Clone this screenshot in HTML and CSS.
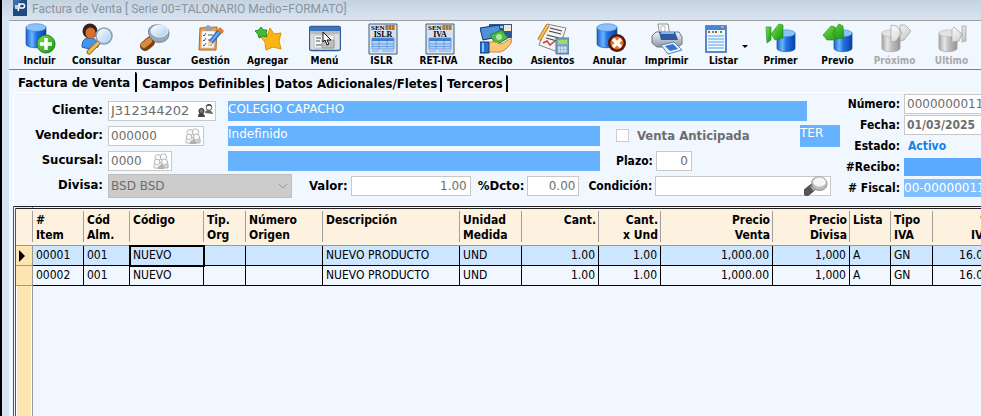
FILE: index.html
```
<!DOCTYPE html>
<html lang="es">
  <head>
    <meta charset="UTF-8" />
    <meta name="viewport" content="width=device-width, initial-scale=1.0" />
    <title>Factura de Venta</title>
    <link rel="stylesheet" href="styles.css">
  </head>
  <body>
    <!-- Shared icon parts -->
    <svg class="defs" width="0" height="0" aria-hidden="true">
      <defs>
        <linearGradient id="blue"><stop offset="0" stop-color="#1d62c8"/><stop offset=".3" stop-color="#6db4ff"/><stop offset=".5" stop-color="#2476e4"/><stop offset="1" stop-color="#0a3ea6"/></linearGradient>
        <linearGradient id="grey"><stop offset="0" stop-color="#a2a2a2"/><stop offset=".3" stop-color="#e6e6e6"/><stop offset=".55" stop-color="#bdbdbd"/><stop offset="1" stop-color="#959595"/></linearGradient>
        <linearGradient id="green" x2="1" y2="1"><stop offset="0" stop-color="#7be04a"/><stop offset="1" stop-color="#149614"/></linearGradient>
        <linearGradient id="pale" x2="1" y2="1"><stop offset="0" stop-color="#ffffff"/><stop offset="1" stop-color="#c2c2c2"/></linearGradient>
        <linearGradient id="lens" x2="1" y2="1"><stop offset="0" stop-color="#ffffff"/><stop offset="1" stop-color="#a4cdf0"/></linearGradient>
        <linearGradient id="steel" x2="0" y2="1"><stop offset="0" stop-color="#f4f6fa"/><stop offset="1" stop-color="#8a94a6"/></linearGradient>
        <symbol id="cyl" viewBox="0 0 22 26">
          <path d="M1 4v17c0 5 20 5 20 0V4z" fill="url(#blue)" stroke="#174a9c" stroke-width=".6"/>
          <ellipse cx="11" cy="4.500" rx="10" ry="3.800" fill="#8cc4fa" stroke="#3f82d8" stroke-width=".6"/>
        </symbol>
        <symbol id="cylgrey" viewBox="0 0 22 26">
          <path d="M1 4v17c0 5 20 5 20 0V4z" fill="url(#grey)" stroke="#999" stroke-width=".6"/>
          <ellipse cx="11" cy="4.500" rx="10" ry="3.800" fill="#e2e2e2" stroke="#b4b4b4" stroke-width=".6"/>
        </symbol>
        <symbol id="seniat" viewBox="0 0 30 32">
          <path d="M1 1h28v30H1z" fill="#d5e2f2" stroke="#4d5c70"/>
          <path d="M4 15h22v11H4z" fill="#b3d4f8"/>
          <path d="M4 15h22v3H4z" fill="#3f7fd0"/>
          <path d="M4 15h22v11H4zM4 21h22M4 23.500h22M11 18v8M19 18v8" fill="none" stroke="#5b93da" stroke-width=".8"/>
          <path d="M4 28h7M14 28h12" stroke="#7fa8dc"/>
          <text x="3" y="7" class="svg-sen">SEN</text>
          <path d="M17 2h10v5H17z" fill="#e09a45"/><path d="M19 2v5M22 2v5M25 2v5" stroke="#6c5a48"/>
        </symbol>
        <symbol id="people" viewBox="0 0 16 16">
          <g fill="#fafafa" stroke="#a0a0a0" stroke-width=".7">
            <circle cx="5" cy="4.500" r="3"/><circle cx="10.500" cy="4" r="3.200"/>
            <path d="M1 15c-1-6 3-7 4-7s4 1 4 7z"/><path d="M8 15c0-7 3-7 4-7s4 1 3 7z" fill="#d6d6d6"/>
            <circle cx="4" cy="9" r="2.800"/><circle cx="11.500" cy="9" r="3"/>
            <path d="M5 15.500c0-4 6-4 6 0z" fill="#b4b4b4"/>
          </g>
        </symbol>
      </defs>
    </svg>

    <div class="window">
      <header class="titlebar">
        <svg class="app-icon" viewBox="0 0 14 16" aria-hidden="true"><path d="M0 0h14v16H0z" fill="#1f4a80"/><path d="M0 0h8L0 9z" fill="#3d6fae"/><path d="M5 4h5c2 0 2 4 0 4H7M7 4L5 11M2 6h5M2 8h3" fill="none" stroke="#fff" stroke-width="1.500"/></svg>
        <h1>Factura de Venta [ Serie 00=TALONARIO Medio=FORMATO]</h1>
      </header>

      <!-- Toolbar -->
      <nav class="toolbar">
        <button type="button">
          <svg viewBox="0 0 32 32"><use href="#cyl" x="1" y="0" width="22" height="26"/><circle cx="22" cy="21" r="9" fill="url(#green)" stroke="#1c7f1c"/><path d="M22 15v12M16 21h12" stroke="#fff" stroke-width="3.500"/></svg>
          Incluir
        </button>
        <button type="button">
          <svg viewBox="0 0 32 32"><path d="M1 24c0-9 5-9 8-9s8 1 8 9c-5 2-11 2-16 0z" fill="#4b93ea" stroke="#1c58b0"/><circle cx="9" cy="8" r="7.500" fill="#35221c"/><ellipse cx="9.500" cy="10" rx="5" ry="5.500" fill="#d8702c"/><path d="M17 20L8 29" stroke="#a86a1c" stroke-width="5" stroke-linecap="round"/><path d="M17 20L8 29" stroke="#f3bd54" stroke-width="3" stroke-linecap="round"/><circle cx="23" cy="13" r="8" fill="url(#lens)" stroke="#8e9fb4" stroke-width="1.600"/></svg>
          Consultar
        </button>
        <button type="button">
          <svg viewBox="0 0 32 32"><path d="M9 20l7-6" stroke="#76808c" stroke-width="8"/><path d="M7 23l5-4" stroke="#7c4211" stroke-width="10" stroke-linecap="round"/><path d="M6 22l5-4" stroke="#d88b3c" stroke-width="6" stroke-linecap="round"/><path d="M11 6c3-7 20-5 20 4s-8 10-13 9c-5-2-9-8-7-13z" fill="#9aa8ba" stroke="#7b8797"/><ellipse cx="21.500" cy="8" rx="8.500" ry="6" fill="url(#lens)" stroke="#edf2f8"/></svg>
          Buscar
        </button>
        <button type="button">
          <svg viewBox="0 0 32 32"><path d="M5 5l17-1-1 23H4z" fill="#eda24a" stroke="#ad6725"/><path d="M7 8h13l-1 17H6z" fill="#fbfbfb" stroke="#b8b8b8" stroke-width=".6"/><path d="M10 4l3-2 4 2v4h-7z" fill="#9a9fae"/><path d="M8 12l1 1 2-3M8 17l1 1 2-3M8 22l1 1 2-3M13 12h5M13 17h5M13 22h4" fill="none" stroke="#4d5666"/><path d="M15 20l10-12" stroke="#2a60b8" stroke-width="5"/><path d="M15 20l9-11" stroke="#68a7f2" stroke-width="2.500"/><path d="M25 4l4 4-2 3-5-4z" fill="#e87b35"/><path d="M13 17l5 4-5 2z" fill="#f6d9a0"/></svg>
          Gestión
        </button>
        <button type="button">
          <svg viewBox="0 0 32 32"><path d="M18 5l4 6 7-1-2 8 2 8-8-2-7 3-1-8-5-6 8-2z" fill="#fdb515" stroke="#e48c10" stroke-linejoin="round"/><path d="M9 4l2 3 4 0-1 3 1 4-4-1-4 2-1-4-3-3 4-1z" fill="#43bb35" stroke="#1f8d20" stroke-linejoin="round"/></svg>
          Agregar
        </button>
        <button type="button">
          <svg viewBox="0 0 32 32"><rect x=".5" y="3.500" width="31" height="24" rx="2" fill="#dedede" stroke="#2d5b9c" stroke-width="1.400"/><path d="M1 4h30v4H1z" fill="#3d72bd"/><path d="M1 8h30v3H1z" fill="#b8babd"/><path d="M5 12h20v13H5z" fill="#f5f5f5" stroke="#999" stroke-width=".6"/><path d="M7 15h5M7 18h4M7 22h6" stroke="#748f9a" stroke-width="1.500"/><path d="M13 17h12v8H13z" fill="#bdbdbd" stroke="#888" stroke-width=".6"/><path d="M14 9v10l2-2 2 5 2-1-2-4h4z" fill="#fff" stroke="#111"/></svg>
          Menú
        </button>
        <button type="button">
          <svg viewBox="0 0 32 32"><use href="#seniat" x="2" y="0" width="30" height="32"/><text x="17" y="14" class="svg-name">ISLR</text></svg>
          ISLR
        </button>
        <button type="button">
          <svg viewBox="0 0 32 32"><use href="#seniat" x="2" y="0" width="30" height="32"/><text x="17" y="14" class="svg-name">IVA</text></svg>
          RET-IVA
        </button>
        <button type="button">
          <svg viewBox="0 0 32 32"><path d="M9 1h23v14H9z" fill="#2c5796"/><path d="M24 2h7v6h-7z" fill="#f4e6cc"/><path d="M11 4h12" stroke="#a9c9f0" stroke-width="2"/><path d="M0 5l19-3 3 11-19 4z" fill="#4f91da" stroke="#15345f"/><path d="M10 12l12-5 6 8-12 7z" fill="#4dbb4a" stroke="#237f2b"/><circle cx="19" cy="14" r="3" fill="#b4e69b"/><path d="M8 20c5-3 9 0 13 1 4-1 8-6 11-5 0 5-7 12-12 13H8z" fill="#f8c778" stroke="#c98a34"/><path d="M0 19h9v11H0z" fill="#2b6fc4" stroke="#123f80"/><path d="M3 20v9" stroke="#8cc1ff" stroke-width="2"/></svg>
          Recibo
        </button>
        <button type="button">
          <svg viewBox="0 0 32 32"><path d="M10 1l19 4-8 24-19-7z" fill="#f3f3f3" stroke="#858585"/><path d="M13 5l12 3M12 8l12 3M10 12l12 3M9 15l11 3" stroke="#444" stroke-width="1.200"/><path d="M6 20l4-2 3 4 5-4" fill="none" stroke="#c23c30" stroke-width="1.400"/><path d="M11 2L2 17" stroke="#c97924" stroke-width="4"/><path d="M11 2L2 17" stroke="#f7c552" stroke-width="2"/><path d="M19 15h13v16H19z" fill="#7ca4c9" stroke="#47749f"/><path d="M21 17h9v4h-9z" fill="#a5de5e"/><path d="M22 23v7M25 23v7M28 23v7M21 25h9M21 28h9" stroke="#e3eef8" stroke-width="1"/></svg>
          Asientos
        </button>
        <button type="button">
          <svg viewBox="0 0 32 32"><use href="#cyl" x="2" y="0" width="22" height="26"/><circle cx="23" cy="20" r="9" fill="#52190a"/><circle cx="23" cy="20" r="6.500" fill="#e87424"/><path d="M19 16l8 8M27 16l-8 8" stroke="#fff" stroke-width="3.200"/></svg>
          Anular
        </button>
        <button type="button">
          <svg viewBox="0 0 32 32"><path d="M7 1h10l2 12H9z" fill="#fff" stroke="#8e8e8e"/><path d="M10 3h4v6h-4z" fill="none" stroke="#b8b8b8"/><path d="M1 13l4-4h23l3 5v7l-4 3H6l-5-4z" fill="url(#steel)" stroke="#6f7683"/><path d="M8 9h16l3 8H10z" fill="#2d5b9e"/><path d="M10 10h13" stroke="#86b3ea" stroke-width="2"/><path d="M10 22l13-3 8 8-14 4z" fill="#e9f1fb" stroke="#5e7fab"/><path d="M14 23l8-2 5 5-8 2z" fill="#3474cc"/></svg>
          Imprimir
        </button>
        <button type="button" class="drop">
          <svg viewBox="0 0 32 32"><path d="M6 3h20v26H6z" fill="#eef6ff" stroke="#2c63b4" stroke-width="1.500"/><path d="M6 3h20v4H6z" fill="#4a83d4"/><path d="M21 4h3" stroke="#f0a040" stroke-width="2"/><path d="M8 9h2M15 9h2" stroke="#d2442e" stroke-width="2"/><path d="M12 9h2M20 9h2" stroke="#3da63c" stroke-width="2"/><path d="M8 13h16M8 16h16M8 19h16M8 22h16M8 25h16" stroke="#8fbdf0" stroke-width="1.500"/></svg>
          Listar
        </button>
        <button type="button">
          <svg viewBox="0 0 32 32"><use href="#cyl" x="11" y="5" width="20" height="26"/><path d="M1 4l5 0v13l-4 3z" fill="url(#green)" stroke="#1c8a1c" stroke-width=".6"/><path d="M6 11L14 1l4 1v13l-8 2z" fill="url(#green)" stroke="#1c8a1c" stroke-width=".6"/></svg>
          Primer
        </button>
        <button type="button">
          <svg viewBox="0 0 32 32"><use href="#cyl" x="11" y="5" width="20" height="26"/><path d="M1 12L9 3l4 1v13l-8 0zM10 10l7-9 4 2 1 12-8 1z" fill="url(#green)" stroke="#1c8a1c" stroke-width=".6"/></svg>
          Previo
        </button>
        <button type="button" disabled>
          <svg viewBox="0 0 32 32"><use href="#cylgrey" x="2" y="5" width="20" height="26"/><path d="M12 2l6 1 5 7-6 8-5 1zM21 2l5 0 6 6-7 9-4 1z" fill="url(#pale)" stroke="#a0a0a0" stroke-width=".7"/></svg>
          Próximo
        </button>
        <button type="button" disabled>
          <svg viewBox="0 0 32 32"><use href="#cylgrey" x="2" y="5" width="20" height="26"/><path d="M16 6l2-2 8 7-3 7-7 1zM26 3l4 0v15l-4 1z" fill="url(#pale)" stroke="#a0a0a0" stroke-width=".7"/></svg>
          Ultimo
        </button>
      </nav>

      <!-- Tabs -->
      <div class="tabs" role="tablist">
        <button type="button" role="tab" class="active" aria-selected="true">Factura de Venta</button>
        <button type="button" role="tab">Campos Definibles</button>
        <button type="button" role="tab">Datos Adicionales/Fletes</button>
        <button type="button" role="tab">Terceros</button>
      </div>

      <!-- Invoice header -->
      <form class="form">
        <div class="data">
          <div class="row">
            <label class="lbl" for="cliente">Cliente:</label>
            <div class="code">
              <span class="field w-cliente"><input id="cliente" type="text" value="J312344202"><svg viewBox="0 0 16 16"><path d="M1 14c0-6 6-6 7 0z" fill="#444"/><circle cx="4.500" cy="8" r="2.600" fill="#777" stroke="#333"/><path d="M8 10c0-4 7-4 8 1z" fill="#666"/><circle cx="12" cy="4.500" r="2.800" fill="#fff" stroke="#555"/><path d="M9 4c0-4 6-4 6 0-2-2-4-2-6 0z" fill="#444"/></svg></span>
            </div>
            <output class="bar">COLEGIO CAPACHO</output>
            <span class="spare"></span>
          </div>
          <div class="row">
            <label class="lbl" for="vendedor">Vendedor:</label>
            <div class="code">
              <span class="field w-vendedor"><input id="vendedor" type="text" value="000000"><svg><use href="#people"/></svg></span>
            </div>
            <output class="bar">Indefinido</output>
            <div class="side">
              <input type="checkbox" id="anticipada" disabled>
              <label class="off" for="anticipada">Venta Anticipada</label>
              <output class="bar ter">TER</output>
            </div>
          </div>
          <div class="row">
            <label class="lbl" for="sucursal">Sucursal:</label>
            <div class="code">
              <span class="field w-sucursal"><input id="sucursal" type="text" value="0000"><svg><use href="#people"/></svg></span>
            </div>
            <output class="bar"></output>
            <div class="side plazo">
              <label for="plazo">Plazo:</label>
              <input class="box w-plazo" id="plazo" type="text" value="0">
            </div>
          </div>
          <div class="row last">
            <label class="lbl" for="divisa">Divisa:</label>
            <div class="select">
              <select id="divisa" disabled><option>BSD BSD</option></select>
              <svg viewBox="0 0 10 6"><path d="M1 1l4 4 4-4" fill="none" stroke="#999"/></svg>
            </div>
            <label class="valor" for="valor">Valor:</label>
            <input class="box w-valor" id="valor" type="text" value="1.00">
            <label for="dcto">%Dcto:</label>
            <input class="box w-dcto" id="dcto" type="text" value="0.00">
            <label class="cond" for="condicion">Condición:</label>
            <span class="field w-cond"><input id="condicion" type="text"><svg class="find" viewBox="0 0 24 20"><path d="M3 16l5-4" stroke="#555" stroke-width="8" stroke-linecap="round"/><path d="M8 13l5-4" stroke="#aaa" stroke-width="6"/><path d="M8 5c2-6 15-5 15 2s-6 8-10 7c-4-1-6-5-5-9z" fill="#bbb" stroke="#888"/><ellipse cx="15.500" cy="6" rx="6.500" ry="4.500" fill="#f6f6f6" stroke="#ddd"/></svg></span>
          </div>
        </div>

        <div class="status">
          <label for="numero">Número:</label><input id="numero" type="text" value="0000000011">
          <label for="fecha">Fecha:</label><input id="fecha" class="fecha" type="text" value="01/03/2025">
          <label for="estado">Estado:</label><output id="estado" class="estado">Activo</output>
          <label for="recibo">#Recibo:</label><output id="recibo" class="recibo"></output>
          <label for="fiscal"># Fiscal:</label><output id="fiscal" class="fiscal">00-00000011</output>
        </div>
      </form>

      <!-- Items -->
      <div class="grid">
        <table>
          <colgroup>
            <col class="c-mark"><col class="c-item"><col class="c-alm"><col class="c-cod"><col class="c-org"><col class="c-orig"><col class="c-desc"><col class="c-uni"><col class="c-cant"><col class="c-uni"><col class="c-venta"><col class="c-div"><col class="c-lista"><col class="c-iva"><col class="c-pct">
          </colgroup>
          <thead>
            <tr>
              <th></th><th>#<br>Item</th><th>Cód<br>Alm.</th><th>Código</th><th>Tip.<br>Org</th><th>Número<br>Origen</th><th>Descripción</th><th>Unidad<br>Medida</th><th class="num">Cant.</th><th class="num">Cant.<br>x Und</th><th class="num">Precio<br>Venta</th><th class="num">Precio<br>Divisa</th><th>Lista</th><th>Tipo<br>IVA</th><th class="num">%<br>IVA</th>
            </tr>
          </thead>
          <tbody>
            <tr class="current">
              <td class="mark"><svg viewBox="0 0 6 12"><path d="M0 0l6 6-6 6z"/></svg></td><td>00001</td><td>001</td><td class="focus">NUEVO</td><td></td><td></td><td>NUEVO PRODUCTO</td><td>UND</td><td class="num">1.00</td><td class="num">1.00</td><td class="num">1,000.00</td><td class="num">1,000</td><td>A</td><td>GN</td><td class="num">16.00</td>
            </tr>
            <tr>
              <td class="mark"></td><td>00002</td><td>001</td><td>NUEVO</td><td></td><td></td><td>NUEVO PRODUCTO</td><td>UND</td><td class="num">1.00</td><td class="num">1.00</td><td class="num">1,000.00</td><td class="num">1,000</td><td>A</td><td>GN</td><td class="num">16.00</td>
            </tr>
          </tbody>
        </table>
      </div>
    </div>
  </body>
</html>
```
FILE: styles.css
```
* {
  box-sizing: border-box;
  margin: 0;
  padding: 0;
}
body {
  background: #000;
  color: #000;
  font: bold 13px "DejaVu Sans Condensed", "DejaVu Sans", sans-serif;
  overflow: hidden;
}
button, input, select {
  font: inherit;
  color: inherit;
  border: none;
  background: none;
  outline: none;
}
.defs {
  position: absolute;
}
.window {
  display: flex;
  flex-direction: column;
  min-height: 100vh;
  margin-left: 2px;
  border-left: 7px solid #d6e3f1;
  background: #f0f7ff;
}

/* title bar */
.titlebar {
  display: flex;
  align-items: flex-start;
  gap: 5px;
  height: 20px;
  margin-left: -7px;
  padding-left: 11px;
  background: linear-gradient(#c5d2e0, #d8e4f1);
}
.titlebar h1 {
  color: #8b949d;
  font: 12px/18px Roboto, sans-serif;
  white-space: nowrap;
}
.app-icon {
  width: 14px;
  height: 16px;
}

/* toolbar */
.toolbar {
  display: flex;
  height: 50px;
  padding-left: 2px;
  border-top: 1px solid #a0a0a0;
  border-bottom: 1px solid #808080;
}
.toolbar button {
  display: flex;
  flex-direction: column;
  align-items: center;
  flex: none;
  width: 57px;
  padding-top: 2px;
  font-size: 10px;
  line-height: 12px;
}
.toolbar svg {
  width: 32px;
  height: 32px;
}
.toolbar button:disabled {
  color: #a9a9a9;
}
.toolbar .drop {
  position: relative;
}
.toolbar .drop svg {
  margin-right: 16px;
}
.toolbar .drop::after {
  content: "";
  position: absolute;
  right: 4px;
  top: 24px;
  border: 3px solid transparent;
  border-top-color: #000;
  border-bottom: none;
}
.svg-sen {
  font: bold 7px "Liberation Serif", serif;
}
.svg-name {
  font: bold 8px "Liberation Serif", serif;
  text-anchor: middle;
}

/* tabs */
.tabs {
  display: flex;
  align-items: flex-end;
  height: 22px;
  padding-left: 4px;
}
.tabs button {
  height: 17px;
  padding: 0 3px 0 5px;
  border-right: 2px solid #000;
  border-radius: 0 2px 0 0;
  line-height: 17px;
  white-space: nowrap;
}
.tabs .active {
  height: 20px;
  padding-right: 5px;
}

/* invoice header */
.form {
  display: flex;
  height: 114px;
  margin-left: 4px;
  border-top: 1px solid #fff;
  border-left: 1px solid #fff;
}
.data {
  flex: 1;
  padding-top: 5px;
}
.row {
  display: flex;
  align-items: center;
  height: 25px;
}
.lbl {
  width: 89px;
  margin-right: 5px;
  padding-bottom: 2px;
  text-align: right;
}
.code {
  width: 120px;
}
.bar {
  flex: 1;
  height: 20px;
  background: #66b2ff;
  color: #fff;
  font: 12px/16px "DejaVu Sans", sans-serif;
}
.spare {
  width: 35px;
}
.field {
  display: flex;
  align-items: center;
  height: 20px;
  padding: 0 2px;
  border: 1px solid #c8c8c8;
  background: #fff;
}
.field input {
  flex: 1;
  min-width: 0;
}
.field svg {
  width: 16px;
  height: 16px;
}
.field .find {
  width: 24px;
  height: 20px;
}
.field input, .box, .status input {
  color: #6d6d6d;
  font: 12px "DejaVu Sans", sans-serif;
}
.w-cliente { width: 108px; }
.w-cliente input {
  font-size: 13px;
}
.w-vendedor { width: 96px; }
.w-sucursal { width: 64px; }
.w-cond { width: 176px; }
.box, .status input {
  height: 20px;
  border: 1px solid #c8c8c8;
  background: #fff;
}
.box {
  padding-right: 3px;
  text-align: right;
}
.w-plazo { width: 36px; }
.w-valor {
  width: 120px;
  margin-right: 4px;
}
.w-dcto { width: 52px; }
.side {
  display: flex;
  align-items: center;
  gap: 8px;
  width: 242px;
  padding: 0 2px 0 16px;
}
.plazo {
  gap: 3px;
  font-size: 12px;
}
.side input[type="checkbox"] {
  appearance: none;
  width: 13px;
  height: 13px;
  border: 1px solid #ccc;
  background: #fff;
}
.off {
  color: #6d6d6d;
}
.ter {
  flex: none;
  width: 40px;
  height: 22px;
  margin-left: auto;
}
.last {
  gap: 3px;
}
.last .lbl {
  margin-right: 2px;
}
.select {
  position: relative;
  width: 184px;
}
.select select {
  appearance: none;
  width: 100%;
  height: 24px;
  padding-left: 2px;
  border: 1px solid #bfbfbf;
  background: #ccc;
  color: #6d6d6d;
  font: 12px "DejaVu Sans", sans-serif;
  opacity: 1;
}
.select svg {
  position: absolute;
  right: 4px;
  top: 9px;
  width: 10px;
  height: 6px;
}
.valor {
  margin-left: 14px;
}
.cond {
  margin-left: 6px;
  font-size: 12px;
}

/* number, date and state */
.status {
  display: grid;
  grid-template-columns: 58px 1fr;
  grid-auto-rows: 21px;
  align-items: center;
  column-gap: 4px;
  width: 139px;
  overflow: hidden;
  font-size: 12px;
  white-space: nowrap;
}
.status label {
  text-align: right;
}
.status input {
  width: 120px;
  padding-left: 2px;
}
.status .fecha {
  font: bold 12px "DejaVu Sans Condensed", sans-serif;
}
.estado {
  padding-left: 4px;
  color: #1482e6;
}
.recibo {
  height: 18px;
  background: #59aaff;
}
.fiscal {
  height: 18px;
  background: #80bfff;
  color: #fff;
  font: 12px/18px "DejaVu Sans", sans-serif;
}

/* items */
.grid {
  flex: 1;
  margin-left: 4px;
  border-top: 3px double #222;
  border-left: 3px double #555;
  background: linear-gradient(90deg, #fff 1px, #fde6b2 1px, #fde6b2 15px, #fff 15px, #fff 16px, #999 16px, #999 17px, transparent 17px);
  overflow: hidden;
}
table {
  width: 978px;
  table-layout: fixed;
  border-collapse: separate;
  border-spacing: 0;
  font-size: 12px;
}
th {
  height: 37px;
  padding: 4px 3px 0;
  border-bottom: 1px solid #999;
  background: linear-gradient(#a0a0a0, #a0a0a0) right 2px / 1px 31px no-repeat, #fdf1e0;
  line-height: 15px;
  text-align: left;
  vertical-align: top;
  white-space: nowrap;
}
td {
  height: 20px;
  padding: 0 3px;
  border-right: 1px solid #000;
  border-bottom: 1px solid #000;
  font-weight: normal;
  line-height: 19px;
  white-space: nowrap;
}
.num {
  text-align: right;
}
.current td {
  background: #cce6ff;
}
.current .focus {
  outline: 2px solid #000;
  outline-offset: -1px;
}
td.mark, .current td.mark {
  background: #fde6b2;
  border-right-color: #999;
  border-bottom-color: #999;
}
.mark svg {
  display: block;
  width: 6px;
  height: 12px;
}
.c-mark { width: 17px; }
.c-item { width: 51px; }
.c-alm { width: 46px; }
.c-cod { width: 74px; }
.c-org { width: 42px; }
.c-orig { width: 77px; }
.c-desc { width: 137px; }
.c-uni { width: 62px; }
.c-cant { width: 77px; }
.c-venta { width: 112px; }
.c-div { width: 77px; }
.c-lista { width: 41px; }
.c-iva { width: 42px; }
.c-pct { width: 61px; }
```
